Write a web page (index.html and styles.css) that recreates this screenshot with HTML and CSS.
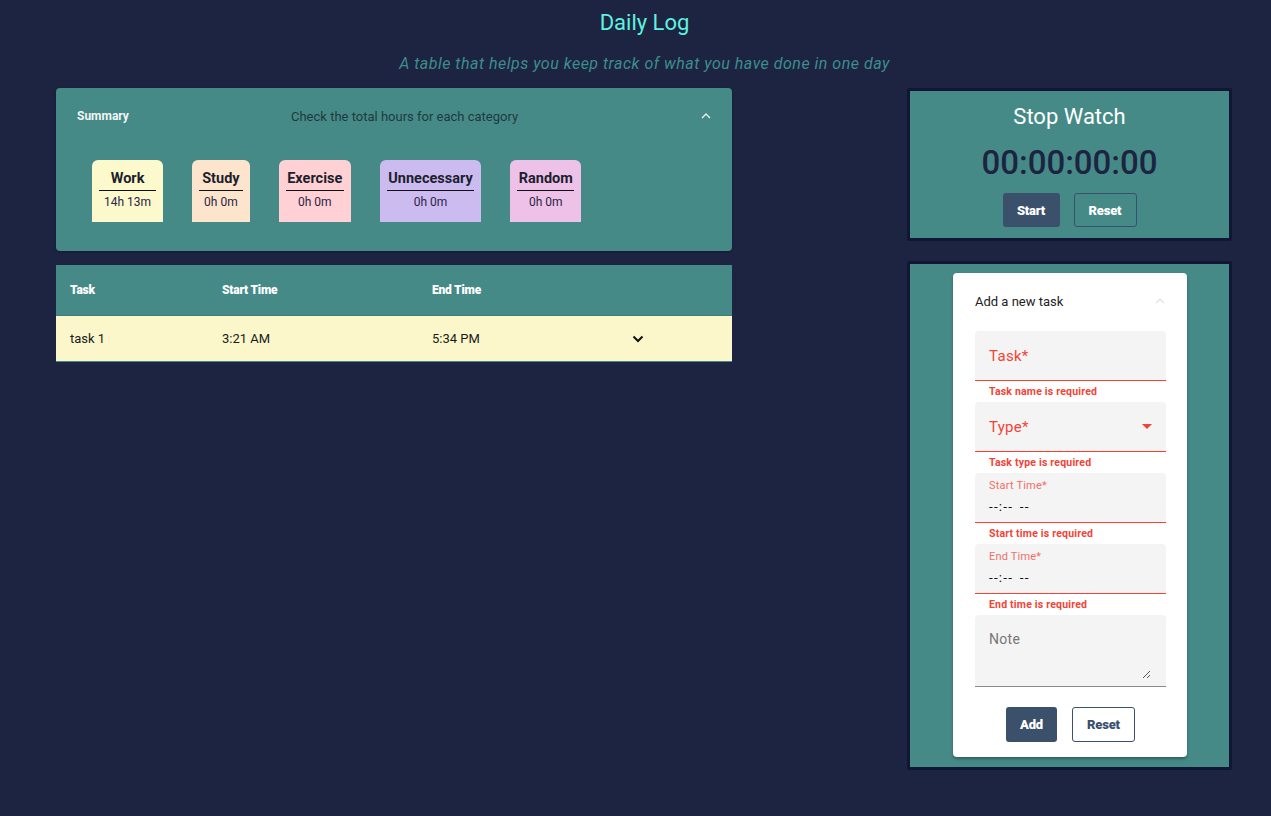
FILE: index.html
```html
<!DOCTYPE html>
<html>
<head>
<meta charset="utf-8">
<link rel="stylesheet" href="styles.css">
</head>
<body>
<header class="page-head">
  <h1 class="title">Daily Log</h1>
  <p class="subtitle">A table that helps you keep track of what you have done in one day</p>
</header>
<main class="layout">
  <section class="left">
    <div class="summary">
      <div class="summary-head">
        <span class="summary-label">Summary</span>
        <span class="summary-desc">Check the total hours for each category</span>
        <svg class="chev-up" width="12" height="8" viewBox="0 0 12 8"><path d="M2 6 L6 2 L10 6" fill="none" stroke="#e6eeee" stroke-width="1.4"/></svg>
      </div>
      <div class="cards">
        <div class="card c-work"><div class="card-title">Work</div><div class="card-val">14h 13m</div></div>
        <div class="card c-study"><div class="card-title">Study</div><div class="card-val">0h 0m</div></div>
        <div class="card c-exercise"><div class="card-title">Exercise</div><div class="card-val">0h 0m</div></div>
        <div class="card c-unnec"><div class="card-title">Unnecessary</div><div class="card-val">0h 0m</div></div>
        <div class="card c-random"><div class="card-title">Random</div><div class="card-val">0h 0m</div></div>
      </div>
    </div>
    <div class="table">
      <div class="t-head">
        <span class="col c1">Task</span>
        <span class="col c2">Start Time</span>
        <span class="col c3">End Time</span>
        <span class="col c4"></span>
      </div>
      <div class="t-row">
        <span class="col c1">task 1</span>
        <span class="col c2">3:21 AM</span>
        <span class="col c3">5:34 PM</span>
        <span class="col c4"><svg width="12" height="8" viewBox="0 0 12 8"><path d="M1.5 1.5 L6 6 L10.5 1.5" fill="none" stroke="#111" stroke-width="2"/></svg></span>
      </div>
    </div>
  </section>
  <aside class="right">
    <div class="panel stopwatch">
      <div class="sw-title">Stop Watch</div>
      <div class="sw-time">00:00:00:00</div>
      <div class="btn-row">
        <button class="btn btn-fill sw-start">Start</button>
        <button class="btn btn-ghost sw-reset">Reset</button>
      </div>
    </div>
    <div class="panel form-panel">
      <div class="form-card">
        <div class="form-head">
          <span>Add a new task</span>
          <svg width="12" height="8" viewBox="0 0 12 8"><path d="M2 6 L6 2 L10 6" fill="none" stroke="#e2e2e2" stroke-width="1.4"/></svg>
        </div>
        <div class="field err"><span class="ph">Task*</span></div>
        <div class="helper">Task name is required</div>
        <div class="field err select"><span class="ph">Type*</span><svg class="caret" width="10" height="5" viewBox="0 0 10 5"><path d="M0 0 L10 0 L5 5 Z" fill="#f44336"/></svg></div>
        <div class="helper">Task type is required</div>
        <div class="field err time"><span class="small-label">Start Time*</span><span class="time-val">--:-- --</span></div>
        <div class="helper">Start time is required</div>
        <div class="field err time"><span class="small-label">End Time*</span><span class="time-val">--:-- --</span></div>
        <div class="helper">End time is required</div>
        <div class="field note"><span class="note-ph">Note</span>
          <svg class="grip" width="9" height="9" viewBox="0 0 9 9"><path d="M8 1 L1 8 M8 5 L5 8" stroke="#555" stroke-width="1"/></svg>
        </div>
        <div class="btn-row form-btns">
          <button class="btn btn-fill add">Add</button>
          <button class="btn btn-outline freset">Reset</button>
        </div>
      </div>
    </div>
  </aside>
</main>
</body>
</html>
```

FILE: styles.css
```css
* { box-sizing: border-box; }
body {
  margin: 0;
  background: #1d2442;
  font-family: Roboto, "Noto Sans", Arial, sans-serif;
  width: 1271px;
  height: 816px;
  overflow: hidden;
}
.page-head { text-align: center; padding: 9px 0 0 18px; }
.title {
  margin: 0;
  font-size: 22px;
  line-height: 28px;
  font-weight: 400;
  color: #5ef2df;
}
.subtitle {
  margin: 17px 0 0;
  font-size: 16px;
  line-height: 20px;
  font-style: italic;
  color: #3c8e8a;
  letter-spacing: 0.5px;
}
.layout {
  display: flex;
  justify-content: space-between;
  padding: 14px 39px 0 56px;
}
.left { width: 676px; display: flex; flex-direction: column; gap: 14px; }
.right { width: 325px; flex: 0 0 325px; display: flex; flex-direction: column; gap: 20px; }

.summary {
  background: #458a86;
  border-radius: 4px;
  height: 163px;
  box-shadow: 0 1px 3px rgba(0,0,0,.3);
}
.summary-head {
  height: 56px;
  display: flex;
  align-items: center;
  padding: 0 20px 0 21px;
}
.summary-label {
  width: 214px;
  color: #f1f5f5;
  font-size: 12px;
  font-weight: 700;
}
.summary-desc {
  flex: 1;
  color: #1e3a40;
  font-size: 13px;
}
.cards {
  display: flex;
  gap: 29px;
  padding: 16px 0 0 36px;
}
.card {
  height: 62px;
  border-radius: 6px 6px 0 0;
  padding: 10px 7px 0;
  display: flex;
  flex-direction: column;
  align-items: stretch;
  text-align: center;
}
.card-title {
  font-size: 14.5px;
  font-weight: 700;
  line-height: 17px;
  color: #1c1f2e;
  padding: 0 1.5px 3px;
  border-bottom: 1.5px solid #111;
}
.card-val {
  font-size: 12px;
  line-height: 22px;
  color: #2a2446;
  padding: 0 5px;
  white-space: nowrap;
}
.c-work { background: #fcf9cc; }
.c-study { background: #fde4cc; }
.c-exercise { background: #ffd1d4; }
.c-unnec { background: #ccbbee; }
.c-random { background: #eec2e8; }

.table { width: 676px; }
.t-head, .t-row { display: flex; align-items: center; }
.t-head {
  height: 51px;
  background: #458a86;
  color: #fff;
  font-size: 12px;
  font-weight: 900;
  letter-spacing: -0.2px;
  border-bottom: 1px solid #3b7e7a;
}
.t-row {
  height: 46px;
  background: #fbf7cb;
  color: #1a1a1a;
  font-size: 13px;
  border-bottom: 1px solid #458a86;
}
.col.c1 { width: 166px; padding-left: 14px; }
.col.c2 { width: 210px; }
.col.c3 { width: 200px; }
.col.c4 { width: 100px; display: flex; align-items: center; }

.panel {
  background: #458a86;
  border: 3px solid #111733;
  border-radius: 2px;
}
.stopwatch {
  height: 153px;
  display: flex;
  flex-direction: column;
  align-items: center;
}
.sw-title {
  margin-top: 13px;
  font-size: 22px;
  line-height: 26px;
  color: #fff;
}
.sw-time {
  margin-top: 13px;
  font-size: 33px;
  line-height: 40px;
  font-weight: 500;
  color: #1d2442;
}
.btn-row { display: flex; justify-content: center; gap: 14px; }
.stopwatch .btn-row { margin-top: 10px; }
.btn {
  font-family: Roboto, Arial, sans-serif;
  font-size: 13px;
  font-weight: 900;
  letter-spacing: -0.2px;
  height: 34px;
  border-radius: 3px;
  cursor: pointer;
}
.btn-fill { background: #3a506b; color: #fff; border: none; }
.btn-ghost { background: transparent; color: #fff; border: 1px solid #3a506b; }
.sw-start { width: 57px; }
.sw-reset { width: 63px; }

.form-panel {
  height: 509px;
  padding: 9px 42px 0 43px;
}
.form-card {
  background: #fff;
  border-radius: 4px;
  height: 484px;
  padding: 0 21px 0 22px;
  box-shadow: 0 2px 3px rgba(0,0,0,.3);
}
.form-head {
  height: 58px;
  display: flex;
  align-items: center;
  justify-content: space-between;
  font-size: 13px;
  color: #222;
  padding-bottom: 2px;
}
.field {
  position: relative;
  background: #f4f4f4;
  border-radius: 4px 4px 0 0;
  height: 50px;
  padding-left: 14px;
  border-bottom: 1px solid #8a8a8a;
  display: flex;
  align-items: center;
}
.field.err { border-bottom: 1.5px solid #f44336; }
.ph { font-size: 15px; color: #f44336; letter-spacing: 0.3px; }
.select { justify-content: space-between; padding-right: 14px; }
.time { flex-direction: column; align-items: flex-start; justify-content: flex-start; }
.small-label { font-size: 11px; color: #f07068; margin-top: 7px; line-height: 12px; letter-spacing: 0.2px; }
.time-val { font-size: 13.5px; color: #111; margin-top: 6px; line-height: 16px; letter-spacing: 1.2px; word-spacing: 2px; }
.helper {
  height: 21px;
  line-height: 21px;
  padding-left: 14px;
  color: #f44336;
  font-size: 10.5px;
  font-weight: 700;
  letter-spacing: 0.2px;
}
.note {
  height: 72px;
  align-items: flex-start;
}
.note-ph { font-size: 14px; color: #777; margin-top: 16px; letter-spacing: 0.3px; }
.grip { position: absolute; right: 15px; bottom: 7px; }
.form-btns { margin-top: 20px; gap: 15px; }
.add { width: 51px; height: 35px; }
.freset { width: 63px; height: 35px; background: #fff; color: #3a506b; border: 1px solid #3a506b; }
```
